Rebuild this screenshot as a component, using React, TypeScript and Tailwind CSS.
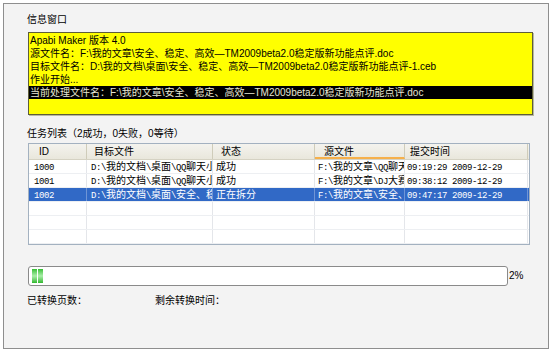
import React from "react";

const cjk = "font-['Liberation_Sans','Noto_Sans_CJK_SC',sans-serif]";

// 表格里的字：半角部分用等宽字，模仿宋体
function Sim({ text }: { text: string }) {
  const parts = text.split(/([\x00-\x7f]+)/).filter((p) => p !== "");
  return (
    <>
      {parts.map((p, i) =>
        /^[\x00-\x7f]+$/.test(p) ? (
          <span key={i} className="font-['Liberation_Mono',monospace] text-[9px] tracking-[-0.4px]">
            {p}
          </span>
        ) : (
          <span key={i}>{p}</span>
        )
      )}
    </>
  );
}

const cols = [
  { title: "ID", w: "w-[58px]", pl: "pl-[10px]", cpl: "pl-[5px]" },
  { title: "目标文件", w: "w-[126px]", pl: "pl-[7px]", cpl: "pl-[4px]" },
  { title: "状态", w: "w-[102px]", pl: "pl-[8px]", cpl: "pl-[3px]" },
  { title: "源文件", w: "w-[90px]", pl: "pl-[9px]", cpl: "pl-[3px]" },
  { title: "提交时间", w: "w-[123px]", pl: "pl-[5px]", cpl: "pl-[2px]" },
];

const rows = [
  ["1000", "D:\\我的文档\\桌面\\QQ聊天小", "成功", "F:\\我的文章\\QQ聊天", "09:19:29 2009-12-29"],
  ["1001", "D:\\我的文档\\桌面\\QQ聊天小", "成功", "F:\\我的文章\\DJ大赛", "09:38:12 2009-12-29"],
  ["1002", "D:\\我的文档\\桌面\\安全、稳定", "正在拆分", "F:\\我的文章\\安全、", "09:47:17 2009-12-29"],
];

export default function App() {
  return (
    <div className={`w-[556px] h-[353px] bg-white pt-[3px] pl-[3px] ${cjk} text-[10px] text-black`}>
      <div className="w-[546px] h-[346px] border border-[#8e8e8e] bg-[#f3f3f3] pl-[23px] pt-[9px] flex flex-col">
        {/* 信息窗口 */}
        <div className="leading-[14px] h-[14px]">信息窗口</div>
        <div className="ml-[1px] mt-[5px] w-[505px] h-[83px] bg-[#ffff00] border border-[#5d5d3a] shadow-[1px_1px_0_#b9b9a0] pt-[1px] leading-[13px]">
          <div className="pl-[1px]">Apabi Maker 版本 4.0</div>
          <div className="pl-[1px]">源文件名：F:\我的文章\安全、稳定、高效—TM2009beta2.0稳定版新功能点评.doc</div>
          <div className="pl-[1px]">目标文件名：D:\我的文档\桌面\安全、稳定、高效—TM2009beta2.0稳定版新功能点评-1.ceb</div>
          <div className="pl-[1px]">作业开始...</div>
          <div className="pl-[1px] bg-black text-[#e6e6d2]">当前处理文件名：F:\我的文章\安全、稳定、高效—TM2009beta2.0稳定版新功能点评.doc</div>
        </div>

        {/* 任务列表 */}
        <div className="mt-[12px] leading-[14px] h-[14px]">任务列表（2成功，0失败，0等待）</div>
        <div className="ml-[1px] mt-[2px] w-[502px] h-[102px] border border-[#a3b1c0] bg-white overflow-hidden">
          <div className="flex h-[16px] bg-gradient-to-b from-[#f4f3ee] to-[#e9e7dc] border-b border-[#d5d2c3]">
            {cols.map((c, i) => (
              <div
                key={c.title}
                className={`${c.w} ${c.pl} leading-[15px] border-r border-[#cfccba] ${i === 3 ? "border-b-2 border-b-[#f6b04a]" : ""}`}
              >
                {c.title}
              </div>
            ))}
          </div>
          {[0, 1, 2, 3, 4, 5].map((r) => {
            const row = rows[r];
            const sel = r === 2;
            return (
              <div
                key={r}
                className={`flex h-[14px] border-b border-[#edeff2] ${sel ? "bg-[#3169c6] text-white" : ""}`}
              >
                {cols.map((c, i) => (
                  <div
                    key={i}
                    className={`${c.w} ${c.cpl} leading-[13px] whitespace-nowrap overflow-hidden border-r ${sel ? "border-[#6f95d6]" : "border-[#e4e6ea]"}`}
                  >
                    {row ? <Sim text={row[i]} /> : null}
                  </div>
                ))}
              </div>
            );
          })}
        </div>

        {/* 进度条 */}
        <div className="mt-[21px] flex items-center">
          <div className="ml-[1px] w-[480px] h-[20px] border border-[#8a8a8a] rounded-[3px] bg-white flex items-center gap-[1px] pl-[3px]">
            {[0, 1].map((b) => (
              <div
                key={b}
                className="w-[5px] h-[14px] bg-gradient-to-b from-[#2fbf2f] via-[#a8eea8] to-[#29b829]"
              />
            ))}
          </div>
          <div className="ml-[1px] leading-[14px]">2%</div>
        </div>

        <div className="mt-[8px] flex leading-[14px]">
          <div className="w-[128px]">已转换页数：</div>
          <div>剩余转换时间：</div>
        </div>
      </div>
    </div>
  );
}
